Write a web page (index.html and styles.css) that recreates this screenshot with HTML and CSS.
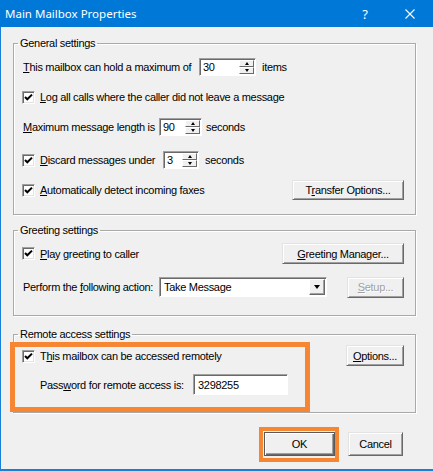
FILE: index.html
```html
<!DOCTYPE html>
<html lang="en">
<head>
    <meta charset="UTF-8">
    <meta name="viewport" content="width=device-width, initial-scale=1.0">
    <title>Main Mailbox Properties</title>
    <link rel="stylesheet" href="styles.css">
</head>
<body>

    <div class="window">
        <!-- Title bar -->
        <div class="titlebar">
            <span class="title">Main Mailbox Properties</span>
            <span class="help">?</span>
            <svg class="close" width="10" height="10" viewBox="0 0 10 10">
                <path d="M0.5 0.5L9.5 9.5M9.5 0.5L0.5 9.5" stroke="#fff" stroke-width="1.1" fill="none"/>
            </svg>
        </div>

        <div class="content">
            <!-- General settings -->
            <fieldset class="group group-general">
                <legend>General settings</legend>

                <div class="row">
                    <span class="lbl lbl-max"><u>T</u>his mailbox can hold a maximum of</span>
                    <span class="spin spin-items">
                        <span class="spin-value">30</span>
                        <span class="spin-btns"><span class="spin-up"></span><span class="spin-down"></span></span>
                    </span>
                    <span class="unit">items</span>
                </div>

                <div class="row">
                    <span class="check"><svg width="11" height="11" viewBox="0 0 11 11"><path d="M2 5L4.3 7.3L9 2.6" stroke="#000" stroke-width="2" fill="none"/></svg></span>
                    <span><u>L</u>og all calls where the caller did not leave a message</span>
                </div>

                <div class="row">
                    <span class="lbl lbl-length"><u>M</u>aximum message length is</span>
                    <span class="spin spin-length">
                        <span class="spin-value">90</span>
                        <span class="spin-btns"><span class="spin-up"></span><span class="spin-down"></span></span>
                    </span>
                    <span class="unit unit-tight">seconds</span>
                </div>

                <div class="row row-spaced">
                    <span class="check"><svg width="11" height="11" viewBox="0 0 11 11"><path d="M2 5L4.3 7.3L9 2.6" stroke="#000" stroke-width="2" fill="none"/></svg></span>
                    <span class="lbl lbl-discard"><u>D</u>iscard messages under</span>
                    <span class="spin spin-discard">
                        <span class="spin-value">3</span>
                        <span class="spin-btns"><span class="spin-up"></span><span class="spin-down"></span></span>
                    </span>
                    <span class="unit">seconds</span>
                </div>

                <div class="row">
                    <span class="check"><svg width="11" height="11" viewBox="0 0 11 11"><path d="M2 5L4.3 7.3L9 2.6" stroke="#000" stroke-width="2" fill="none"/></svg></span>
                    <span><u>A</u>utomatically detect incoming faxes</span>
                    <button class="btn btn-transfer">T<u>r</u>ansfer Options...</button>
                </div>
            </fieldset>

            <!-- Greeting settings -->
            <fieldset class="group group-greeting">
                <legend>Greeting settings</legend>

                <div class="row row-tall">
                    <span class="check"><svg width="11" height="11" viewBox="0 0 11 11"><path d="M2 5L4.3 7.3L9 2.6" stroke="#000" stroke-width="2" fill="none"/></svg></span>
                    <span><u>P</u>lay greeting to caller</span>
                    <button class="btn btn-greeting"><u>G</u>reeting Manager...</button>
                </div>

                <div class="row row-action">
                    <span class="lbl lbl-action">Perform the <u>f</u>ollowing action:</span>
                    <span class="combo">
                        <span class="combo-value">Take Message</span>
                        <span class="combo-btn"></span>
                    </span>
                    <button class="btn btn-setup" disabled><u>S</u>etup...</button>
                </div>
            </fieldset>

            <!-- Remote access settings -->
            <fieldset class="group group-remote">
                <legend>Remote access settings</legend>

                <div class="remote">
                    <div class="remote-left">
                        <div class="row row-check">
                            <span class="check"><svg width="11" height="11" viewBox="0 0 11 11"><path d="M2 5L4.3 7.3L9 2.6" stroke="#000" stroke-width="2" fill="none"/></svg></span>
                            <span>T<u>h</u>is mailbox can be accessed remotely</span>
                        </div>
                        <div class="row row-password">
                            <span class="lbl lbl-password">Pass<u>w</u>ord for remote access is:</span>
                            <span class="field">3298255</span>
                        </div>
                        <span class="mark mark-remote"></span>
                    </div>
                    <button class="btn btn-options"><u>O</u>ptions...</button>
                </div>
            </fieldset>

            <!-- Dialog buttons -->
            <div class="footer">
                <span class="ok-wrap">
                    <button class="btn btn-ok">OK</button>
                    <span class="mark mark-ok"></span>
                </span>
                <button class="btn btn-cancel">Cancel</button>
            </div>
        </div>
    </div>

</body>
</html>
```

FILE: styles.css
```css
* {
    box-sizing: border-box;
}

body {
    margin: 0;
    background-color: #f0f0f0;
    font-family: "Liberation Sans", Arial, sans-serif;
    font-size: 11px;
    letter-spacing: -0.3px;
    color: #000;
}

.window {
    width: 433px;
    height: 471px;
    background-color: #f0f0f0;
    border-left: 1px solid #1a7fd6;
    border-bottom: 2px solid #1a7fd6;
    display: flex;
    flex-direction: column;
}

/* Title bar */
.titlebar {
    height: 27px;
    margin-left: -1px;
    background-color: #0078d7;
    color: #fff;
    display: flex;
    align-items: center;
    padding: 0 18px 0 5px;
    font-family: "Noto Sans", "Open Sans", sans-serif;
    letter-spacing: 0;
}

.title {
    font-size: 11.5px;
}

.help {
    margin-left: auto;
    margin-right: 37px;
    font-size: 13px;
}

.content {
    padding: 10px 17px 0 12px;
}

/* Group boxes */
.group {
    margin: 0;
    min-width: 0;
    border: 1px solid #a9a9a9;
    box-shadow: inset 1px 1px 0 #fff, 1px 1px 0 #fff;
    padding: 7px 11px 14px 8px;
}

.group legend {
    padding: 0 2px;
    margin-left: -4px;
    line-height: 13px;
}

.group-greeting {
    margin-top: 9px;
    padding-top: 6px;
    padding-bottom: 18px;
}

.group-remote {
    margin-top: 12px;
    padding-top: 4px;
    padding-bottom: 17px;
}

.row {
    display: flex;
    align-items: center;
    height: 20px;
}

.row + .row {
    margin-top: 10px;
}

.row.row-spaced {
    margin-top: 13px;
}

.row-tall {
    height: 21px;
}

.row.row-action {
    margin-top: 13px;
}

.lbl {
    flex-shrink: 0;
    white-space: nowrap;
}

.lbl-max {
    width: 177px;
    padding-left: 1px;
}

.lbl-length,
.lbl-action {
    width: 137px;
    padding-left: 1px;
}

.lbl-discard {
    width: 123px;
}

.lbl-password {
    width: 171px;
    padding-left: 18px;
}

.unit {
    margin-left: 6px;
}

.unit-tight {
    margin-left: 4px;
}

/* Checkbox */
.check {
    width: 13px;
    height: 13px;
    flex-shrink: 0;
    margin-right: 5px;
    background-color: #fff;
    border: 1px solid;
    border-color: #a0a0a0 #fff #fff #a0a0a0;
    box-shadow: inset 1px 1px 0 #696969, inset -1px -1px 0 #e3e3e3;
}

.check svg {
    display: block;
}

/* Spinner */
.spin {
    display: flex;
    height: 18px;
    background-color: #fff;
    border: 1px solid;
    border-color: #a0a0a0 #fff #fff #a0a0a0;
    box-shadow: inset 1px 1px 0 #696969;
    flex-shrink: 0;
}

.spin-items {
    width: 57px;
}

.spin-length {
    width: 43px;
}

.spin-discard {
    width: 36px;
}

.spin-value {
    flex: 1;
    padding: 1px 0 0 3px;
    line-height: 14px;
}

.spin-btns {
    width: 16px;
    display: flex;
    flex-direction: column;
    padding: 1px 1px 1px 0;
}

.spin-up,
.spin-down {
    flex: 1;
    display: flex;
    align-items: center;
    justify-content: center;
    background-color: #f0f0f0;
    border: 1px solid;
    border-color: #fff #696969 #696969 #fff;
}

.spin-up::before {
    content: "";
    border-left: 2.5px solid transparent;
    border-right: 2.5px solid transparent;
    border-bottom: 3px solid #000;
}

.spin-down::before {
    content: "";
    border-left: 2.5px solid transparent;
    border-right: 2.5px solid transparent;
    border-top: 3px solid #000;
}

/* Combo box */
.combo {
    display: flex;
    width: 168px;
    height: 20px;
    flex-shrink: 0;
    background-color: #fff;
    border: 1px solid;
    border-color: #a0a0a0 #fff #fff #a0a0a0;
    box-shadow: inset 1px 1px 0 #696969;
    padding: 1px 1px 1px 0;
}

.combo-value {
    flex: 1;
    padding-left: 4px;
    line-height: 16px;
}

.combo-btn {
    width: 16px;
    display: flex;
    align-items: center;
    justify-content: center;
    background-color: #f0f0f0;
    border: 1px solid;
    border-color: #fff #696969 #696969 #fff;
    box-shadow: inset -1px -1px 0 #a0a0a0;
}

.combo-btn::before {
    content: "";
    border-left: 3.5px solid transparent;
    border-right: 3.5px solid transparent;
    border-top: 4px solid #000;
}

/* Text field */
.field {
    width: 95px;
    height: 21px;
    background-color: #fff;
    border: 1px solid;
    border-color: #a0a0a0 #fff #fff #a0a0a0;
    box-shadow: inset 1px 1px 0 #696969;
    padding: 3px 0 0 4px;
    line-height: 14px;
}

/* Buttons */
.btn {
    font: inherit;
    letter-spacing: inherit;
    color: #000;
    height: 21px;
    padding: 0;
    background-color: #f0f0f0;
    border: 1px solid;
    border-color: #e3e3e3 #696969 #696969 #e3e3e3;
    box-shadow: inset 1px 1px 0 #fff, inset -1px -1px 0 #a0a0a0;
    flex-shrink: 0;
}

.btn-transfer {
    margin-left: auto;
    width: 112px;
    height: 20px;
}

.btn-greeting {
    margin-left: auto;
    width: 122px;
}

.btn-setup {
    margin-left: auto;
    width: 57px;
    color: #a0a0a0;
    text-shadow: 1px 1px 0 #fff;
}

.btn-options {
    margin-left: auto;
    width: 58px;
    align-self: flex-start;
}

/* Remote access */
.remote {
    display: flex;
}

.remote-left {
    position: relative;
}

.row.row-check {
    height: 22px;
}

.row.row-password {
    margin-top: 7px;
    height: 21px;
}

/* Orange highlight marks */
.mark {
    position: absolute;
    border: 5px solid #f68631;
}

.mark-remote {
    left: -12px;
    top: -3px;
    width: 300px;
    height: 70px;
}

.ok-wrap {
    position: relative;
    display: flex;
}

.mark-ok {
    left: -5px;
    top: -5px;
    right: -4px;
    bottom: -6px;
    border-width: 4px;
}

/* Footer */
.footer {
    margin-top: 19px;
    padding-right: 13px;
    display: flex;
    justify-content: flex-end;
    gap: 13px;
}

.btn-ok {
    width: 71px;
    height: 24px;
    border: 1px solid #5a5a5a;
    box-shadow: inset 1px 1px 0 #fff, inset -1px -1px 0 #696969, inset -2px -2px 0 #a0a0a0;
}

.btn-cancel {
    width: 55px;
    height: 24px;
}
```
